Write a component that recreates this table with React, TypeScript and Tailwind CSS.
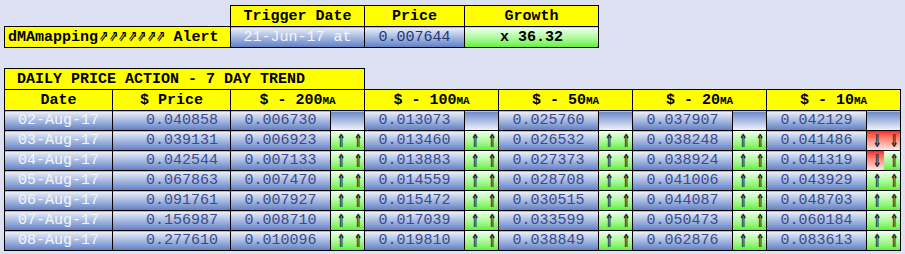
import React from 'react';

type Trend = 'up' | 'down' | null;

interface Row {
  date: string;
  price: string;
  ma: { value: string; trend: [Trend, Trend] }[];
}

const rows: Row[] = [
  {
    date: '02-Aug-17',
    price: '0.040858',
    ma: [
      { value: '0.006730', trend: [null, null] },
      { value: '0.013073', trend: [null, null] },
      { value: '0.025760', trend: [null, null] },
      { value: '0.037907', trend: [null, null] },
      { value: '0.042129', trend: [null, null] },
    ],
  },
  {
    date: '03-Aug-17',
    price: '0.039131',
    ma: [
      { value: '0.006923', trend: ['up', 'up'] },
      { value: '0.013460', trend: ['up', 'up'] },
      { value: '0.026532', trend: ['up', 'up'] },
      { value: '0.038248', trend: ['up', 'up'] },
      { value: '0.041486', trend: ['down', 'down'] },
    ],
  },
  {
    date: '04-Aug-17',
    price: '0.042544',
    ma: [
      { value: '0.007133', trend: ['up', 'up'] },
      { value: '0.013883', trend: ['up', 'up'] },
      { value: '0.027373', trend: ['up', 'up'] },
      { value: '0.038924', trend: ['up', 'up'] },
      { value: '0.041319', trend: ['down', 'up'] },
    ],
  },
  {
    date: '05-Aug-17',
    price: '0.067863',
    ma: [
      { value: '0.007470', trend: ['up', 'up'] },
      { value: '0.014559', trend: ['up', 'up'] },
      { value: '0.028708', trend: ['up', 'up'] },
      { value: '0.041006', trend: ['up', 'up'] },
      { value: '0.043929', trend: ['up', 'up'] },
    ],
  },
  {
    date: '06-Aug-17',
    price: '0.091761',
    ma: [
      { value: '0.007927', trend: ['up', 'up'] },
      { value: '0.015472', trend: ['up', 'up'] },
      { value: '0.030515', trend: ['up', 'up'] },
      { value: '0.044087', trend: ['up', 'up'] },
      { value: '0.048703', trend: ['up', 'up'] },
    ],
  },
  {
    date: '07-Aug-17',
    price: '0.156987',
    ma: [
      { value: '0.008710', trend: ['up', 'up'] },
      { value: '0.017039', trend: ['up', 'up'] },
      { value: '0.033599', trend: ['up', 'up'] },
      { value: '0.050473', trend: ['up', 'up'] },
      { value: '0.060184', trend: ['up', 'up'] },
    ],
  },
  {
    date: '08-Aug-17',
    price: '0.277610',
    ma: [
      { value: '0.010096', trend: ['up', 'up'] },
      { value: '0.019810', trend: ['up', 'up'] },
      { value: '0.038849', trend: ['up', 'up'] },
      { value: '0.062876', trend: ['up', 'up'] },
      { value: '0.083613', trend: ['up', 'up'] },
    ],
  },
];

const maHeaders = ['200', '100', '50', '20', '10'];

const blue = 'bg-linear-to-b from-[#eef1fa] to-[#5f7fc3]';
const blueFlip = 'bg-linear-to-b from-[#6a87c6] to-[#f3f5fc]';
const green = 'bg-linear-to-b from-[#f0fff0] to-[#5ef02c]';
const red = 'bg-linear-to-b from-[#ff1c1c] to-[#ffe4e4]';
const yellow = 'bg-[#ffff00]';
const cell = 'border border-black p-0';

function ArrowCell({ trend }: { trend: [Trend, Trend] }) {
  if (!trend[0]) return <td className={`${cell} ${blueFlip}`} />;
  return (
    <td className={`${cell} h-[20px]`}>
      <div className="flex h-[19px]">
        {trend.map((t, i) => (
          <span key={i} className={`flex-1 flex items-center justify-center ${t === 'down' ? red : green}`}>
            <span className="inline-block w-[8px] text-center scale-x-[0.62] text-[#222] font-['DejaVu_Sans',sans-serif] font-bold text-[18px] leading-none">
              {t === 'down' ? '⇓' : '⇑'}
            </span>
          </span>
        ))}
      </div>
    </td>
  );
}

export default function App() {
  return (
    <div className="min-h-[254px] bg-[#dde1f1] pl-[4px] pt-[5px] font-['Liberation_Mono','Courier_New',monospace] text-[15px] leading-none">
      {/* alert summary */}
      <table className="border-collapse table-fixed w-[595px]">
        <colgroup>
          <col className="w-[226px]" />
          <col className="w-[134px]" />
          <col className="w-[100px]" />
          <col className="w-[134px]" />
        </colgroup>
        <tbody>
          <tr className="h-[21px]">
            <td className="p-0" />
            <td className={`${cell} ${yellow} text-center font-bold text-black`}>Trigger Date</td>
            <td className={`${cell} ${yellow} text-center font-bold text-black`}>Price</td>
            <td className={`${cell} ${yellow} text-center font-bold text-black`}>Growth</td>
          </tr>
          <tr className="h-[21px]">
            <td className={`${cell} ${yellow} pl-[3px] font-bold text-black whitespace-nowrap`}>
              dMAmapping
              {Array.from({ length: 7 }).map((_, i) => (
                <span
                  key={i}
                  className="inline-block w-[9.5px] text-center scale-x-[0.72] font-['DejaVu_Sans',sans-serif] text-[15px] font-bold"
                >
                  ⇗
                </span>
              ))}{' '}
              Alert
            </td>
            <td className={`${cell} ${blue} text-center text-[#f4f6fc]`}>21-Jun-17 at</td>
            <td className={`${cell} ${blue} text-center text-[#24357a]`}>0.007644</td>
            <td className={`${cell} ${green} text-center font-bold text-black`}>x 36.32</td>
          </tr>
        </tbody>
      </table>

      {/* 7 day trend */}
      <table className="mt-[20px] border-collapse table-fixed w-[897px]">
        <colgroup>
          <col className="w-[108px]" />
          <col className="w-[118px]" />
          {maHeaders.map((m) => (
            <React.Fragment key={m}>
              <col className="w-[100px]" />
              <col className="w-[34px]" />
            </React.Fragment>
          ))}
        </colgroup>
        <tbody>
          <tr className="h-[21px]">
            <td colSpan={4} className={`${cell} ${yellow} pl-[12px] font-bold text-black whitespace-nowrap`}>
              DAILY PRICE ACTION - 7 DAY TREND
            </td>
            <td colSpan={8} className="p-0" />
          </tr>
          <tr className="h-[21px]">
            <td className={`${cell} ${yellow} text-center font-bold text-black`}>Date</td>
            <td className={`${cell} ${yellow} text-center font-bold text-black`}>$ Price</td>
            {maHeaders.map((m) => (
              <td key={m} colSpan={2} className={`${cell} ${yellow} text-center font-bold text-black`}>
                $ - {m}
                <span className="[font-variant:small-caps]">ma</span>
              </td>
            ))}
          </tr>
          {rows.map((r) => (
            <tr key={r.date} className="h-[20px]">
              <td className={`${cell} ${blue} text-center text-[#f4f6fc]`}>{r.date}</td>
              <td className={`${cell} ${blue} text-right pr-[12px] text-[#3a4a8c]`}>{r.price}</td>
              {r.ma.map((m, i) => (
                <React.Fragment key={i}>
                  <td className={`${cell} ${blue} text-center text-[#3a4a8c]`}>{m.value}</td>
                  <ArrowCell trend={m.trend} />
                </React.Fragment>
              ))}
            </tr>
          ))}
        </tbody>
      </table>
    </div>
  );
}
